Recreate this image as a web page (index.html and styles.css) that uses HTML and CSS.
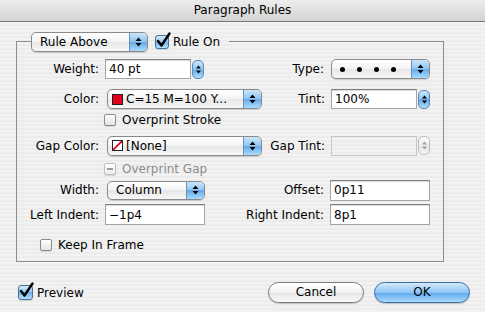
FILE: index.html
```html
<!DOCTYPE html>
<html lang="en">
<head>
<meta charset="UTF-8">
<meta name="viewport" content="width=device-width, initial-scale=1.0">
<title>Paragraph Rules</title>
<link rel="stylesheet" href="styles.css">
</head>
<body>
<div class="window">
  <div class="titlebar">Paragraph Rules</div>

  <div class="group">
    <div class="legend">
      <div class="popup popup-rule">
        <span class="popup-text">Rule Above</span>
        <span class="popup-arrows"><svg width="7" height="12" viewBox="0 0 7 12"><path d="M0.5 5 L3.5 1.5 L6.5 5Z M0.5 7 L3.5 10.5 L6.5 7Z"/></svg></span>
      </div>
      <div class="check">
        <span class="box box-big box-on"><svg class="tick" width="16" height="17" viewBox="0 0 16 17"><path d="M3 9 L6.5 13.5 L14.5 1.5"/></svg></span>
        <span>Rule On</span>
      </div>
    </div>

    <div class="row row-a">
      <div class="side-left">
        <span class="lbl">Weight:</span>
        <div class="spin">
          <span class="field field-spin">40 pt</span>
          <span class="stepper"><svg width="7" height="11" viewBox="0 0 7 11"><path d="M1 4.5 L3.5 1.5 L6 4.5Z M1 6.5 L3.5 9.5 L6 6.5Z"/></svg></span>
        </div>
      </div>
      <div class="side-right">
        <span class="lbl-r">Type:</span>
        <div class="popup popup-r">
          <span class="popup-text dots"><i></i><i></i><i></i><i></i></span>
          <span class="popup-arrows"><svg width="7" height="12" viewBox="0 0 7 12"><path d="M0.5 5 L3.5 1.5 L6.5 5Z M0.5 7 L3.5 10.5 L6.5 7Z"/></svg></span>
        </div>
      </div>
    </div>

    <div class="row row-b">
      <div class="side-left">
        <span class="lbl">Color:</span>
        <div class="popup popup-wide">
          <span class="popup-text"><span class="swatch swatch-red"></span>C=15 M=100 Y...</span>
          <span class="popup-arrows"><svg width="7" height="12" viewBox="0 0 7 12"><path d="M0.5 5 L3.5 1.5 L6.5 5Z M0.5 7 L3.5 10.5 L6.5 7Z"/></svg></span>
        </div>
      </div>
      <div class="side-right">
        <span class="lbl-r">Tint:</span>
        <div class="spin">
          <span class="field field-spin">100%</span>
          <span class="stepper"><svg width="7" height="11" viewBox="0 0 7 11"><path d="M1 4.5 L3.5 1.5 L6 4.5Z M1 6.5 L3.5 9.5 L6 6.5Z"/></svg></span>
        </div>
      </div>
    </div>

    <div class="row row-c">
      <div class="check check-indent">
        <span class="box"></span>
        <span>Overprint Stroke</span>
      </div>
    </div>

    <div class="row row-d">
      <div class="side-left">
        <span class="lbl">Gap Color:</span>
        <div class="popup popup-wide">
          <span class="popup-text"><span class="swatch swatch-none"><svg width="9" height="9" viewBox="0 0 9 9"><path d="M0 9 L9 0"/></svg></span>[None]</span>
          <span class="popup-arrows"><svg width="7" height="12" viewBox="0 0 7 12"><path d="M0.5 5 L3.5 1.5 L6.5 5Z M0.5 7 L3.5 10.5 L6.5 7Z"/></svg></span>
        </div>
      </div>
      <div class="side-right">
        <span class="lbl-r">Gap Tint:</span>
        <div class="spin spin-off">
          <span class="field field-spin"></span>
          <span class="stepper"><svg width="7" height="11" viewBox="0 0 7 11"><path d="M1 4.5 L3.5 1.5 L6 4.5Z M1 6.5 L3.5 9.5 L6 6.5Z"/></svg></span>
        </div>
      </div>
    </div>

    <div class="row row-e">
      <div class="check check-indent check-off">
        <span class="box box-mixed"><i></i></span>
        <span>Overprint Gap</span>
      </div>
    </div>

    <div class="row row-f">
      <div class="side-left">
        <span class="lbl">Width:</span>
        <div class="popup popup-width">
          <span class="popup-text">Column</span>
          <span class="popup-arrows"><svg width="7" height="12" viewBox="0 0 7 12"><path d="M0.5 5 L3.5 1.5 L6.5 5Z M0.5 7 L3.5 10.5 L6.5 7Z"/></svg></span>
        </div>
      </div>
      <div class="side-right">
        <span class="lbl-r">Offset:</span>
        <span class="field field-plain">0p11</span>
      </div>
    </div>

    <div class="row row-g">
      <div class="side-left">
        <span class="lbl">Left Indent:</span>
        <span class="field field-plain">&minus;1p4</span>
      </div>
      <div class="side-right">
        <span class="lbl-r">Right Indent:</span>
        <span class="field field-plain">8p1</span>
      </div>
    </div>

    <div class="row row-h">
      <div class="check check-frame">
        <span class="box"></span>
        <span>Keep In Frame</span>
      </div>
    </div>
  </div>

  <div class="footer">
    <div class="check">
      <span class="box box-big box-on box-preview"><svg class="tick" width="16" height="17" viewBox="0 0 16 17"><path d="M3 9 L6.5 13.5 L14.5 1.5"/></svg></span>
      <span>Preview</span>
    </div>
    <div class="buttons">
      <span class="btn">Cancel</span>
      <span class="btn btn-default">OK</span>
    </div>
  </div>
</div>
</body>
</html>
```

FILE: styles.css
```css
* {
  box-sizing: border-box;
}

body {
  margin: 0;
  font-family: "DejaVu Sans", "Liberation Sans", sans-serif;
  font-size: 12px;
  color: #000;
  background: #fff;
}

.window {
  width: 485px;
  height: 312px;
  overflow: hidden;
  background: repeating-linear-gradient(#ececec 0 2px, #f2f2f2 2px 4px) fixed;
}

.titlebar {
  height: 22px;
  line-height: 21px;
  text-align: center;
  border-bottom: 1px solid #777;
  border-radius: 5px 5px 0 0;
  background: linear-gradient(#ededed, #d3d3d3);
}

/* group box */
.group {
  margin: 19px 41px 0 16px;
  padding: 0 13px 8px 0;
  border: 1px solid #8e8e8e;
}

.legend {
  display: flex;
  align-items: center;
  width: fit-content;
  margin: -10px 0 0 14px;
  padding-right: 9px;
  gap: 7px;
  background: repeating-linear-gradient(#ececec 0 2px, #f2f2f2 2px 4px) fixed;
}

.row {
  display: flex;
  align-items: center;
}
.row-a { margin-top: 6px; height: 22px; }
.row-b { margin-top: 8px; height: 22px; }
.row-c { margin-top: 2px; height: 16px; }
.row-d { margin-top: 7px; height: 21px; }
.row-e { margin-top: 5px; height: 16px; }
.row-f { margin-top: 2px; height: 22px; }
.row-g { margin-top: 3px; height: 21px; }
.row-h { margin-top: 12px; height: 16px; }

.side-left {
  display: flex;
  align-items: center;
  gap: 6px;
}

.side-right {
  display: flex;
  align-items: center;
  gap: 6px;
  margin-left: auto;
}

.lbl {
  width: 82px;
  text-align: right;
  white-space: nowrap;
}

.lbl-r {
  white-space: nowrap;
}

/* popup buttons */
.popup {
  display: flex;
  height: 20px;
  border: 1px solid #8a8a8a;
  border-radius: 5px;
  overflow: hidden;
  background: linear-gradient(#fff, #f3f3f3 50%, #e6e6e6 50%, #f7f7f7);
  box-shadow: 0 1px 1px rgba(0, 0, 0, 0.15);
}

.popup-text {
  flex: 1;
  display: flex;
  align-items: center;
  padding-left: 8px;
  white-space: nowrap;
  overflow: hidden;
}

.popup-arrows {
  width: 18px;
  display: flex;
  align-items: center;
  justify-content: center;
  border-left: 1px solid #6d8fb6;
  background: linear-gradient(#cbe5fb, #8ec4f2 50%, #64a8ea 50%, #a9dcfd);
}

.popup-arrows svg,
.stepper svg {
  fill: #000;
}

.popup-rule { width: 117px; }
.popup-r { width: 99px; margin-left: 1px; }
.popup-wide { width: 155px; margin-left: 2px; }
.popup-width { width: 98px; height: 19px; margin-left: 2px; }

.popup-wide .popup-text {
  padding-left: 4px;
}

.dots {
  gap: 12px;
  padding-left: 8px;
}

.dots i {
  width: 5px;
  height: 5px;
  border-radius: 50%;
  background: #000;
}

.swatch {
  width: 11px;
  height: 11px;
  margin-right: 3px;
  border: 1px solid #222;
  flex: none;
}

.swatch-red {
  background: #e2001a;
}

.swatch-none {
  background: #fff;
  display: flex;
}

.swatch-none path {
  stroke: #e2001a;
  stroke-width: 1.8;
}

/* text fields */
.field {
  display: flex;
  align-items: center;
  height: 21px;
  padding-left: 3px;
  background: #fff;
  border: 1px solid #a5a5a5;
  border-top-color: #7e7e7e;
  box-shadow: inset 0 1px 1px rgba(0, 0, 0, 0.15);
  white-space: nowrap;
}

.field-plain {
  width: 100px;
}

.spin {
  display: flex;
  align-items: center;
  gap: 1px;
}

.field-spin {
  width: 86px;
  height: 20px;
}

.stepper {
  width: 12px;
  height: 19px;
  display: flex;
  align-items: center;
  justify-content: center;
  border: 1px solid #5c88ba;
  border-radius: 5px;
  background: linear-gradient(#cbe5fb, #8ec4f2 50%, #64a8ea 50%, #a9dcfd);
}

.spin-off .field {
  background: transparent;
  border-color: #c6c6c6;
  box-shadow: none;
}

.spin-off .stepper {
  border-color: #bdbdbd;
  background: linear-gradient(#fbfbfb, #ededed 50%, #e2e2e2 50%, #f5f5f5);
}

.spin-off .stepper svg {
  fill: #a0a0a0;
}

/* checkboxes */
.check {
  display: flex;
  align-items: center;
  white-space: nowrap;
}

.box {
  width: 12px;
  height: 12px;
  margin-right: 6px;
  border: 1px solid #8a8a8a;
  border-radius: 2px;
  background: linear-gradient(#fff, #e4e4e4);
  box-shadow: 0 1px 1px rgba(0, 0, 0, 0.12);
  flex: none;
}

.box-big {
  position: relative;
  width: 14px;
  height: 14px;
  margin-right: 4px;
  border-color: #46729f;
  border-radius: 3px;
  background: linear-gradient(#d4e9fc, #93c6f3 50%, #6caeee 50%, #b8e1ff);
}

.box-preview {
  width: 15px;
  height: 15px;
}

.tick {
  position: absolute;
  left: -1px;
  top: -4px;
}

.tick path {
  fill: none;
  stroke: #000;
  stroke-width: 2.4;
  stroke-linecap: round;
  stroke-linejoin: round;
}

.check-indent {
  margin-left: 87px;
}

.check-frame {
  margin-left: 23px;
}

.check-off {
  color: #8c8c8c;
}

.box-mixed {
  display: flex;
  align-items: center;
  justify-content: center;
  border-color: #bcbcbc;
  background: linear-gradient(#fff, #ededed);
}

.box-mixed i {
  width: 6px;
  height: 2px;
  background: #9a9a9a;
}

/* footer */
.footer {
  display: flex;
  align-items: center;
  height: 21px;
  margin-top: 20px;
  padding: 0 15px 0 18px;
}

.buttons {
  display: flex;
  gap: 10px;
  margin-left: auto;
}

.btn {
  width: 96px;
  height: 21px;
  line-height: 19px;
  text-align: center;
  border: 1px solid #7a7a7a;
  border-radius: 11px;
  background: linear-gradient(#fff, #f2f2f2 50%, #e3e3e3 50%, #fbfbfb);
  box-shadow: 0 1px 1px rgba(0, 0, 0, 0.2);
}

.btn-default {
  border-color: #3c6ea6;
  background: linear-gradient(#d3e9fc, #8ec5f4 50%, #5ea5ec 50%, #a8dcfe);
}
```
